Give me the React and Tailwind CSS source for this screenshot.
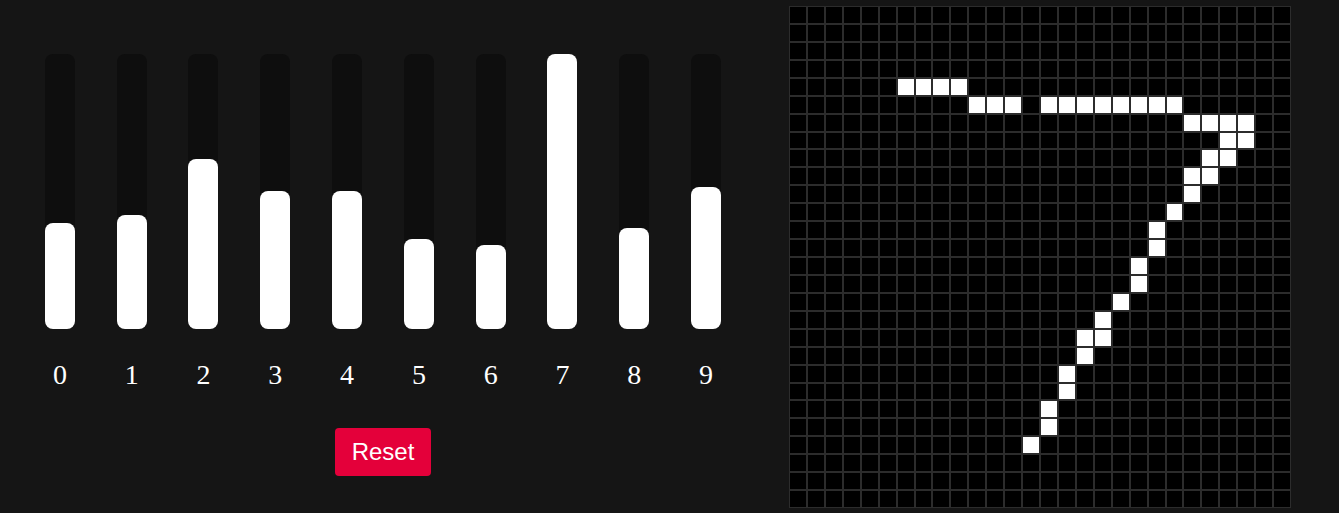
import { useState } from "react";

// bar heights out of 275px track
const initialBars = [106, 114, 170, 138, 138, 90, 84, 275, 101, 142];

// white pixels of the drawn "7", row -> columns
const drawn = {
  4: [6, 7, 8, 9],
  5: [10, 11, 12, 14, 15, 16, 17, 18, 19, 20, 21],
  6: [22, 23, 24, 25],
  7: [24, 25],
  8: [23, 24],
  9: [22, 23],
  10: [22],
  11: [21],
  12: [20],
  13: [20],
  14: [19],
  15: [19],
  16: [18],
  17: [17],
  18: [16, 17],
  19: [16],
  20: [15],
  21: [15],
  22: [14],
  23: [14],
  24: [13],
};

function App() {
  const [bars, setBars] = useState(initialBars);

  const cells = [];
  for (let r = 0; r < 28; r++) {
    for (let c = 0; c < 28; c++) {
      const on = drawn[r] && drawn[r].includes(c);
      cells.push(
        <div
          key={r + "-" + c}
          className={"border border-[#2c2c2c] " + (on ? "bg-white" : "bg-black")}
        />
      );
    }
  }

  return (
    <div className="w-full h-[513px] bg-[#151515] flex overflow-hidden">
      {/* Bars */}
      <div className="ml-[24px] w-[718px] pt-[54px] flex flex-col items-center">
        <div className="grid grid-cols-10 w-full">
          {bars.map((h, i) => (
            <div key={i} className="flex flex-col items-center">
              <div className="w-[30px] h-[275px] bg-[#0e0e0e] rounded-lg flex flex-col justify-end">
                <div className="w-full bg-white rounded-lg" style={{ height: h + "px" }} />
              </div>
              <div className="mt-[30px] text-[28px] leading-[32px] text-white font-['Liberation_Serif',serif]">
                {i}
              </div>
            </div>
          ))}
        </div>
        <button
          onClick={() => setBars(initialBars.map(() => 0))}
          className="mt-[37px] bg-[#e4003a] text-white text-2xl px-[17px] py-2 rounded font-['Liberation_Sans',Arial,sans-serif]"
        >
          Reset
        </button>
      </div>

      {/* Drawing grid */}
      <div className="ml-[47px] mt-[6px] w-[502px] h-[502px] grid grid-cols-[repeat(28,minmax(0,1fr))] grid-rows-[repeat(28,minmax(0,1fr))] bg-black">
        {cells}
      </div>
    </div>
  );
}

export default App;
